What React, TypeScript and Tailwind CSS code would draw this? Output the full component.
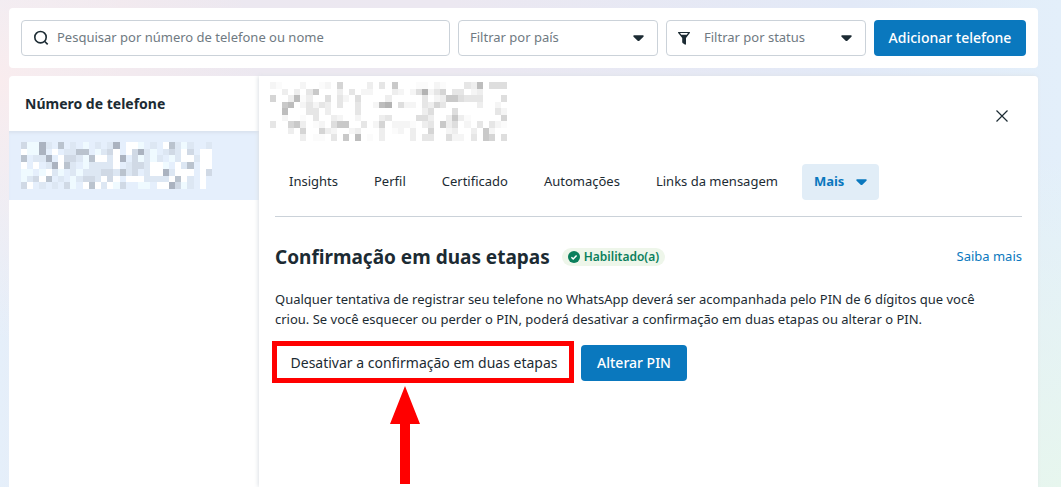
const phoneMosaic = [
  "kmmnl.j.l.m.l.ln.wwm.l.wjlml..l",
  "wmmn.w.lljj.mlkw.wknlm.lklwk.ww",
  "j.lln.wkklmjwwlwn.kmlml.mlwwlww",
  "w.w.lnwjl.mllllw.lkklwwm.wlj.ww",
  "mm.mwlm.lmlllkkljlk.lwwnlwww.wk",
  "mlkwj.l.mlkklwkw.wwwllllwjwl.w.",
  "kw.l.l.km.wjwlwmk..mm.wwnkml.w.",
];

const titleMosaic = [
  "ba...b..ab.f....c.d.g...aa.ba...dch.eee",
  "..c.c.dg...c.d.bb...cb.beibdf.dd.bc....",
  "f..chac..e.db.e....c.....d.bcggeddd...e",
  "..gh.bdbdc.d..d..bhi.ebb.dcfd.....c..b.",
  "..h...dd.c....d..........ce...e......db",
  "..b..a.d..cb..b...cd....eec..cgca.....f",
  "d..fgc.ab.egg..d.bf.bbba.cd.gce.b.d.dba",
  "...c.f..fcb..bc...c.ab.c..f..bc..c.gb..",
  ".....c.aa.d.g.h.a.c....c.dd..ebb.d.gf.e",
];

const cellColors: Record<string, string> = {
  a: "#fbfbfb",
  b: "#f5f5f5",
  c: "#eeeeee",
  d: "#e6e6e6",
  e: "#dedede",
  f: "#d5d5d5",
  g: "#c9c9c9",
  h: "#bdbdbd",
  i: "#b3b3b3",
  j: "#bac3ce",
  k: "#d0d9e5",
  l: "#dde7f3",
  m: "#effaff",
  n: "#abb3c0",
  w: "#ffffff",
};

const tabs = ["Insights", "Perfil", "Certificado", "Automações", "Links da mensagem"];

function Mosaic({ rows, className, label }: { rows: string[]; className: string; label: string }) {
  return (
    <svg
      role="img"
      aria-label={label}
      viewBox={`0 0 ${rows[0].length} ${rows.length}`}
      preserveAspectRatio="none"
      shapeRendering="crispEdges"
      className={className}
    >
      {rows.flatMap((row, y) =>
        [...row].map((cell, x) =>
          cell === "." ? null : (
            <rect key={`${x}-${y}`} x={x} y={y} width="1" height="1" fill={cellColors[cell]} />
          ),
        ),
      )}
    </svg>
  );
}

function Caret({ className }: { className: string }) {
  return (
    <svg viewBox="0 0 12 7" className={className} fill="currentColor" aria-hidden="true">
      <path d="M1.2.3h9.6c.9 0 1.3.9.6 1.5L7.2 5.9a1.7 1.7 0 0 1-2.4 0L.6 1.8C-.1 1.2.3.3 1.2.3Z" />
    </svg>
  );
}

function Toolbar() {
  return (
    <header className="flex gap-2 rounded bg-white p-3">
      <label className="flex h-9 min-w-0 flex-1 items-center gap-2 rounded border border-[#cbd2d9] px-[11px]">
        <svg
          viewBox="0 0 16 16"
          className="size-4 shrink-0"
          fill="none"
          stroke="currentColor"
          strokeWidth="1.6"
          aria-hidden="true"
        >
          <circle cx="7.5" cy="7.2" r="5.7" />
          <path d="m11.5 11.2 3.2 3.2" />
        </svg>
        <input
          type="text"
          aria-label="Pesquisar"
          placeholder="Pesquisar por número de telefone ou nome"
          className="min-w-0 flex-1 outline-none placeholder:text-[#6f7a82]"
        />
      </label>
      <div className="relative w-[200px]">
        <select
          aria-label="Filtrar por país"
          className="h-9 w-full appearance-none rounded border border-[#cbd2d9] pl-[11px] text-[#6f7a82]"
        >
          <option>Filtrar por país</option>
        </select>
        <Caret className="pointer-events-none absolute top-[15px] right-[14px] w-[11px]" />
      </div>
      <div className="relative w-[200px]">
        <svg viewBox="0 0 12 13" className="pointer-events-none absolute top-3 left-3 w-3" aria-hidden="true">
          <path
            fill="currentColor"
            fillRule="evenodd"
            d="M.6 0h10.8c.6 0 .8.5.4 1L8 6v5.8c0 .8-.6 1.1-1.2.7l-2.2-1.6a1 1 0 0 1-.4-.8V6L.2 1C-.2.5 0 0 .6 0ZM2 1.1l1.3 1.6h5.4L10 1.1H2Z"
          />
        </svg>
        <select
          aria-label="Filtrar por status"
          className="h-9 w-full appearance-none rounded border border-[#cbd2d9] pl-[37px] text-[#6f7a82]"
        >
          <option>Filtrar por status</option>
        </select>
        <Caret className="pointer-events-none absolute top-[15px] right-[14px] w-[11px]" />
      </div>
      <button type="button" className="h-9 w-[152px] rounded bg-[#0a78be] text-sm font-medium text-white">
        Adicionar telefone
      </button>
    </header>
  );
}

function PhoneList() {
  return (
    <aside className="w-[250px] shrink-0">
      <h2 className="flex h-[55px] items-center px-4 text-sm font-bold">Número de telefone</h2>
      <button
        type="button"
        className="flex h-[69px] w-full items-center bg-[#e5effc] px-3 shadow-[inset_0_3px_3px_-1px_#d9e2ee]"
      >
        <Mosaic rows={phoneMosaic} label="Número oculto" className="h-[47px] w-[191px]" />
      </button>
    </aside>
  );
}

function TwoStep() {
  return (
    <section className="px-4 pt-7">
      <div className="flex h-6 items-center">
        <h1 className="text-[19px] leading-6 font-bold">Confirmação em duas etapas</h1>
        <span className="ml-3 flex h-[18px] items-center gap-1 rounded-full bg-[#eef6ea] px-[6px] text-xs font-semibold text-[#0a7f5c]">
          <svg viewBox="0 0 12 12" className="size-3" aria-hidden="true">
            <circle cx="6" cy="6" r="6" fill="currentColor" />
            <path d="m3.4 6.2 1.8 1.8 3.4-3.6" fill="none" stroke="#fff" strokeWidth="1.5" />
          </svg>
          Habilitado(a)
        </span>
        <a href="#saiba-mais" className="ml-auto text-[#0a78be]">
          Saiba mais
        </a>
      </div>
      <p className="mt-5 max-w-[720px] leading-5">
        Qualquer tentativa de registrar seu telefone no WhatsApp deverá ser acompanhada pelo PIN de 6 dígitos que
        você criou. Se você esquecer ou perder o PIN, poderá desativar a confirmação em duas etapas ou alterar o PIN.
      </p>
      <div className="mt-4 flex gap-2 text-sm">
        <div className="relative">
          <button type="button" className="h-9 w-[298px] rounded">
            Desativar a confirmação em duas etapas
          </button>
          <div className="pointer-events-none absolute -top-1 -right-px -bottom-0.5 -left-[3px] border-[5px] border-[#ff0000]" />
          <svg
            viewBox="0 0 30 98"
            className="pointer-events-none absolute top-[41px] left-[115px] h-[98px] w-[30px]"
            fill="#ff0000"
            aria-hidden="true"
          >
            <path d="M15 0 30 38H20V98H10V38H0Z" />
          </svg>
        </div>
        <button type="button" className="h-9 w-[106px] rounded bg-[#0a78be] font-medium text-white">
          Alterar PIN
        </button>
      </div>
    </section>
  );
}

function Details() {
  return (
    <section className="min-w-0 flex-1 rounded-tr bg-white shadow-[-1px_0_4px_#dde1e6]">
      <div className="flex justify-between pt-1.5 pr-6 pl-[11px]">
        <Mosaic rows={titleMosaic} label="Nome oculto" className="h-[59px] w-[237px]" />
        <button type="button" aria-label="Fechar" className="mt-[22px] flex size-6 items-center justify-center">
          <svg viewBox="0 0 12 12" className="size-3" stroke="currentColor" strokeWidth="1.2" aria-hidden="true">
            <path d="m.5.5 11 11m0-11-11 11" />
          </svg>
        </button>
      </div>
      <nav className="mx-4 mt-[23px] flex gap-3 border-b border-[#cbd2d9] pb-4 pl-0.5">
        {tabs.map((tab) => (
          <button key={tab} type="button" className="h-9 rounded px-3 whitespace-nowrap">
            {tab}
          </button>
        ))}
        <button type="button" className="flex h-9 items-center gap-3 rounded bg-[#e1edf7] px-3 font-bold text-[#0a78be]">
          Mais
          <Caret className="w-[11px]" />
        </button>
      </nav>
      <TwoStep />
    </section>
  );
}

export default function App() {
  return (
    <main className="flex min-h-screen flex-col gap-2 bg-[radial-gradient(circle_at_0_80px,#f9ecee,transparent_260px),radial-gradient(circle_at_100%_100%,#e7f6ee,transparent_330px),linear-gradient(90deg,#e5effa_0,#ece8f0_120px,#ece8f1_450px,#e2e9f7_850px,#e3effa_100%)] pt-2 pr-[23px] pl-[9px] font-['Noto_Sans','Segoe_UI',sans-serif] text-[13px] text-[#1c2b33]">
      <Toolbar />
      <div className="flex flex-1 rounded-t bg-white">
        <PhoneList />
        <Details />
      </div>
    </main>
  );
}
